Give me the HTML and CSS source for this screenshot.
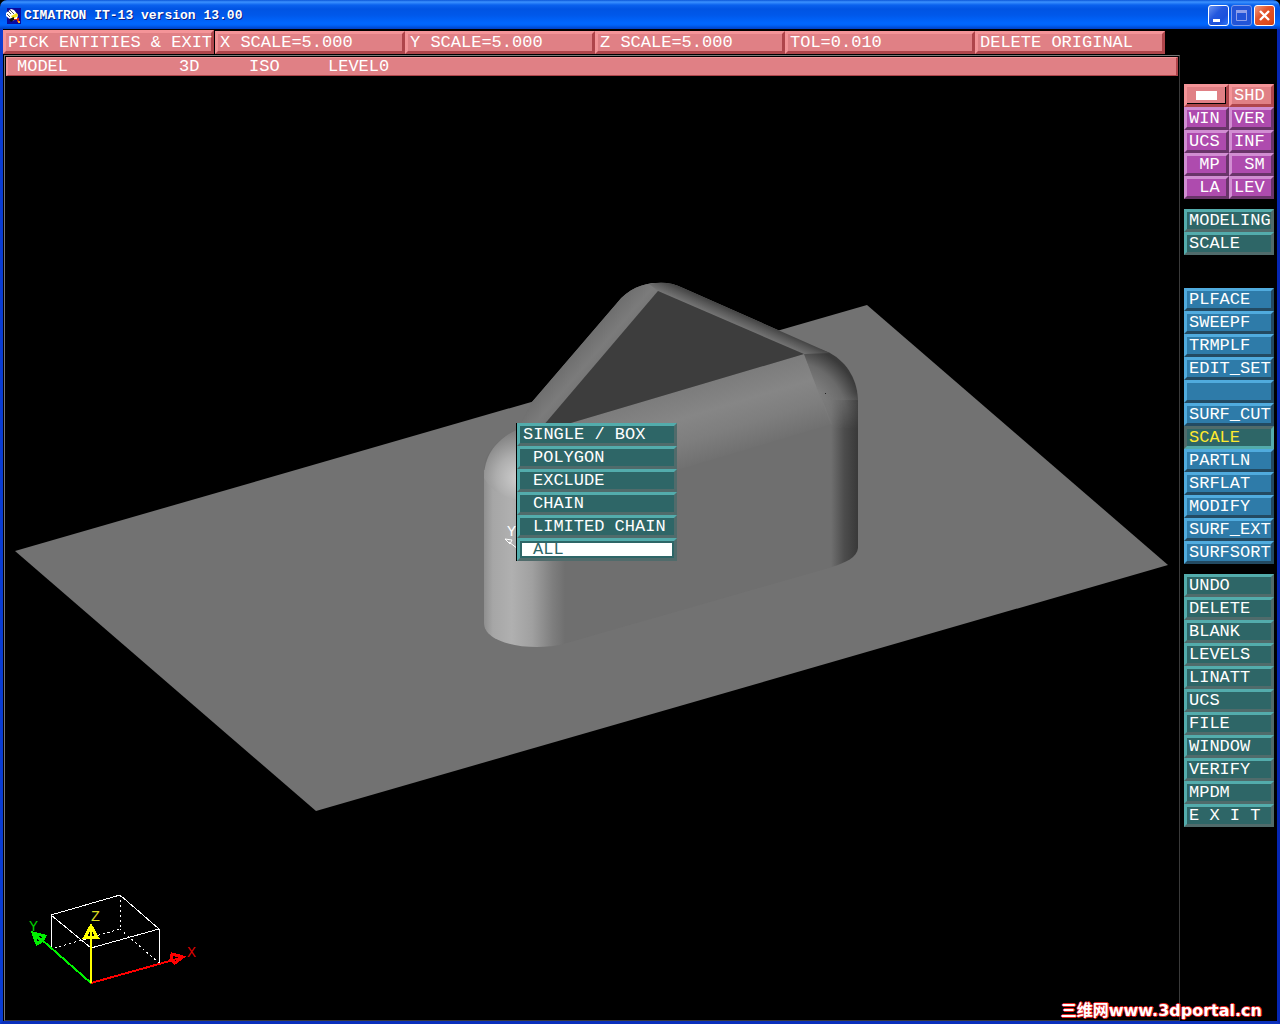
FILE: index.html
```html
<!DOCTYPE html>
<html lang="en">
<head>
<meta charset="utf-8">
<title>CIMATRON IT-13 version 13.00</title>
<link rel="stylesheet" href="styles.css">
</head>
<body>
<div class="window">
  <header class="titlebar">
    <svg class="app-icon" width="15" height="16" viewBox="0 0 15 16" aria-hidden="true">
      <rect x="1" width="14" height="16" fill="#0a0a9c"/>
      <path d="M0 5 L5 1 L8 2 L12 7 L11 11 L6 13 L0 8Z" fill="#fff"/>
      <path d="M2 3 L5 6 M4 2 L8 6 M1 6 L4 9" stroke="#555" fill="none"/>
      <path d="M5 8 L11 5 L12 8 L7 11Z" fill="#f5e21c"/>
      <path d="M3 11 L8 9 L8 12 L5 14Z" fill="#111"/>
      <path d="M8 11h3v-1h2v4h-2v-2H8Z" fill="#d22818"/>
      <path d="M12 13h2v2h-2Z" fill="#f5b01c"/>
    </svg>
    <h1 class="title">CIMATRON IT-13 version 13.00</h1>
    <div class="controls">
      <button class="control" aria-label="Minimize"><svg width="17" height="17" viewBox="0 0 17 17"><rect x="3" y="12" width="7" height="3" fill="#fff"/></svg></button>
      <button class="control dim" aria-label="Maximize" disabled><svg width="17" height="17" viewBox="0 0 17 17"><path d="M3.500 3.500h10v10h-10z" fill="none" stroke="#8fa0ea"/><path d="M3 3h11v3H3z" fill="#8fa0ea"/></svg></button>
      <button class="control close" aria-label="Close"><svg width="17" height="17" viewBox="0 0 17 17"><path d="M4 4l9 9M13 4l-9 9" stroke="#fff" stroke-width="2.400"/></svg></button>
    </div>
  </header>

  <div class="client">
    <nav class="prompts" aria-label="Prompt">
      <button class="key pink main-prompt">PICK ENTITIES &amp; EXIT</button>
      <button class="key pink">X SCALE=5.000</button>
      <button class="key pink">Y SCALE=5.000</button>
      <button class="key pink">Z SCALE=5.000</button>
      <button class="key pink">TOL=0.010</button>
      <button class="key pink">DELETE ORIGINAL</button>
    </nav>

    <div class="workspace">
      <main class="stage">
        <div class="status">
          <span class="model">MODEL</span><span class="dim-3d">3D</span><span class="view">ISO</span><span>LEVEL0</span>
        </div>
        <div class="canvas">
          <svg class="scene" viewBox="6 76 1173 943" preserveAspectRatio="xMinYMin meet" role="img" aria-label="Shaded isometric model">
            <defs>
              <linearGradient id="front" gradientUnits="userSpaceOnUse" x1="670" y1="394" x2="692" y2="468">
                <stop offset="0" stop-color="#7c7c7c"/><stop offset=".35" stop-color="#868686"/><stop offset=".65" stop-color="#7e7e7e"/><stop offset="1" stop-color="#6f6f6f"/>
              </linearGradient>
              <linearGradient id="back" gradientUnits="userSpaceOnUse" x1="730" y1="322" x2="737" y2="306">
                <stop offset="0" stop-color="#747474"/><stop offset=".4" stop-color="#595959"/><stop offset="1" stop-color="#2c2c2c"/>
              </linearGradient>
              <linearGradient id="leftCyl" gradientUnits="userSpaceOnUse" x1="483" y1="0" x2="565" y2="0">
                <stop offset="0" stop-color="#8c8c8c"/><stop offset=".12" stop-color="#a6a6a6"/><stop offset=".35" stop-color="#b0b0b0"/><stop offset=".6" stop-color="#a0a0a0"/><stop offset=".85" stop-color="#7e7e7e"/><stop offset="1" stop-color="#6f6f6f"/>
              </linearGradient>
              <linearGradient id="rightCyl" gradientUnits="userSpaceOnUse" x1="831" y1="0" x2="858" y2="0">
                <stop offset="0" stop-color="#6f6f6f"/><stop offset=".5" stop-color="#4c4c4c"/><stop offset="1" stop-color="#393939"/>
              </linearGradient>
              <linearGradient id="leftFillet" gradientUnits="userSpaceOnUse" x1="574" y1="348" x2="604" y2="374">
                <stop offset="0" stop-color="#6c6c6c"/><stop offset=".5" stop-color="#7b7b7b"/><stop offset="1" stop-color="#717171"/>
              </linearGradient>
              <radialGradient id="leftBall" gradientUnits="userSpaceOnUse" cx="520" cy="478" r="52">
                <stop offset="0" stop-color="#d0d0d0"/><stop offset=".45" stop-color="#aeaeae"/><stop offset="1" stop-color="#747474"/>
              </radialGradient>
              <radialGradient id="rightBall" gradientUnits="userSpaceOnUse" cx="788" cy="420" r="76">
                <stop offset=".55" stop-color="#3a3a3a" stop-opacity="0"/><stop offset=".78" stop-color="#3a3a3a" stop-opacity=".3"/><stop offset="1" stop-color="#3a3a3a"/>
              </radialGradient>
              <linearGradient id="fade" gradientUnits="userSpaceOnUse" x1="0" y1="392" x2="0" y2="430">
                <stop offset="0" stop-color="#fff"/><stop offset="1" stop-color="#000"/>
              </linearGradient>
              <mask id="ballFade" maskUnits="userSpaceOnUse" x="790" y="330" width="80" height="110">
                <rect x="790" y="330" width="80" height="110" fill="url(#fade)"/>
              </mask>
            </defs>
            <path fill="#727272" d="M15 551 867 305 1168 565 316 811Z"/>
            <path fill="#6f6f6f" d="M484 470C484 453 499 438 518 429L532 402 617 303C628 289 643 283 657 283Q671 282 683 288L830 353C848 363 858 381 858 400V548C857 557 846 563 832 567L563 644C530 652 484 644 484 623Z"/>
            <path fill="url(#leftFillet)" d="M532 402 617 303C628 289 643 283 657 283L664 283 658 291 537 433 510 445Z"/>
            <path fill="url(#rightCyl)" d="M831 400H858V548C857 557 846 563 831 567Z"/>
            <path fill="url(#front)" d="M537 433 804 354 832 424 566 503Z"/>
            <g mask="url(#ballFade)">
              <path fill="#7e7e7e" d="M804 354 820 349 830 353C848 363 858 381 858 402V428H832Z"/>
              <path fill="url(#rightBall)" d="M804 354 820 349 830 353C848 363 858 381 858 402V428H832Z"/>
            </g>
            <path fill="url(#back)" d="M658 291 649 284Q668 280 683 288L830 353 804 354Z"/>
            <path fill="url(#leftCyl)" d="M484 470H565V644C530 652 484 644 484 623Z"/>
            <path fill="url(#leftBall)" d="M484 478C484 453 499 438 518 429H565V500H518Q494 496 484 478Z"/>
            <path fill="#3d3d3d" d="M658 291 804 354 537 433Z"/>
            <rect x="825" y="393" width="1" height="1" fill="#222"/>
            <g class="label" fill="#fff"><text x="507" y="536">Y</text></g>
            <path d="M505 539l4 4M505 539l7 1-2 4zM509 542l9 7" stroke="#fff" fill="none"/>

            <g fill="none" stroke="#fff" shape-rendering="crispEdges">
              <path d="M51 915 120 895 159 929 91 948ZM51 915V949M159 929V963"/>
              <path stroke-dasharray="2 3" d="M120 895V929L51 949M120 929 159 963"/>
            </g>
            <g fill="none" stroke-width="2" shape-rendering="crispEdges">
              <path stroke="#00f000" d="M91 983 41 939"/>
              <path stroke="#00f000" stroke-width="3" d="M33 933 45 936 42 941 37 944ZM33 933 41 940"/>
              <path stroke="#f00" d="M91 983 184 957"/>
              <path stroke="#f00" stroke-width="3" d="M183 957 172 954 171 959 175 963Z"/>
              <path stroke="#ff0" d="M91 983V925"/>
              <path stroke="#ff0" stroke-width="3" d="M91 926 97 937H85Z"/>
            </g>
            <g class="label">
              <text x="29" y="931" fill="#0c0">Y</text>
              <text x="91" y="921" fill="#dd2">Z</text>
              <text x="187" y="957" fill="#d00">X</text>
            </g>
          </svg>
          <div class="popup" role="menu">
            <button class="key teal first" role="menuitem">SINGLE / BOX</button>
            <button class="key teal" role="menuitem">POLYGON</button>
            <button class="key teal" role="menuitem">EXCLUDE</button>
            <button class="key teal" role="menuitem">CHAIN</button>
            <button class="key teal" role="menuitem">LIMITED CHAIN</button>
            <button class="key teal picked" role="menuitem">ALL</button>
          </div>
        </div>
      </main>

      <aside class="sidebar">
        <div class="group pair">
          <button class="key pink pressed" aria-label="Redraw"><span class="swatch"></span></button>
          <button class="key pink">SHD</button>
          <button class="key purple">WIN</button>
          <button class="key purple">VER</button>
          <button class="key purple">UCS</button>
          <button class="key purple">INF</button>
          <button class="key purple"> MP</button>
          <button class="key purple"> SM</button>
          <button class="key purple"> LA</button>
          <button class="key purple">LEV</button>
        </div>
        <div class="group heading">
          <button class="key teal">MODELING</button>
          <button class="key teal">SCALE</button>
        </div>
        <div class="group">
          <button class="key blue">PLFACE</button>
          <button class="key blue">SWEEPF</button>
          <button class="key blue">TRMPLF</button>
          <button class="key blue">EDIT_SET</button>
          <button class="key blue" aria-label="Empty"></button>
          <button class="key blue">SURF_CUT</button>
          <button class="key teal current">SCALE</button>
          <button class="key blue">PARTLN</button>
          <button class="key blue">SRFLAT</button>
          <button class="key blue">MODIFY</button>
          <button class="key blue">SURF_EXT</button>
          <button class="key blue">SURFSORT</button>
        </div>
        <div class="group">
          <button class="key teal">UNDO</button>
          <button class="key teal">DELETE</button>
          <button class="key teal">BLANK</button>
          <button class="key teal">LEVELS</button>
          <button class="key teal">LINATT</button>
          <button class="key teal">UCS</button>
          <button class="key teal">FILE</button>
          <button class="key teal">WINDOW</button>
          <button class="key teal">VERIFY</button>
          <button class="key teal">MPDM</button>
          <button class="key teal">E X I T</button>
        </div>
      </aside>
    </div>
  </div>
  <a class="watermark" href="#">三维网www.3dportal.cn</a>
</div>
</body>
</html>
```
FILE: styles.css
```css
* { box-sizing: border-box; }

body {
  margin: 0;
  background: #000;
  font: 17px/17px "Liberation Mono", "Courier New", monospace;
  color: #fff;
}

.window {
  position: relative;
  display: flex;
  flex-direction: column;
  min-height: 100vh;
  background: #000;
}

/* Title bar */
.titlebar {
  display: flex;
  align-items: center;
  gap: 3px;
  height: 29px;
  padding: 2px 5px 0 6px;
  border-radius: 7px 7px 0 0;
  background: linear-gradient(#0a55d8, #3c92ff 2px, #0a62ee 5px, #0054e3 9px, #0058ea 15px, #0067ff 23px, #0064fa 25px, #0040c4);
}

.title {
  flex: 1;
  margin: 0;
  font-size: 13px;
  line-height: 16px;
  font-weight: bold;
  text-shadow: 1px 1px #0a1f86;
}

.controls { display: flex; gap: 2px; }

.control {
  display: grid;
  place-items: center;
  width: 21px;
  height: 21px;
  padding: 0;
  border: 1px solid #fff;
  border-radius: 3px;
  background: linear-gradient(135deg, #6b94f0, #2458de 40%, #1a50dc 70%, #2f78f8);
}
.control.dim { border-color: #7f9bea; background: #2254d8; }
.control.close { background: linear-gradient(135deg, #f09a80, #e2532b 40%, #dc4a1c 80%, #c83c10); }

/* Client area */
.client {
  flex: 1;
  display: flex;
  flex-direction: column;
  padding-top: 1px;
  border: solid #0a3cd2;
  border-width: 0 3px 3px;
  border-right-color: #0526b4;
  border-bottom-color: #0a30bc;
}

.key {
  height: 23px;
  padding: 0 0 0 2px;
  border: 3px solid;
  font: inherit;
  color: #fff;
  text-align: left;
  white-space: pre;
}
.pink { background: #e08085; border-color: #f49498 #af454b #af454b #f49498; }
.purple { background: #ae4bae; border-color: #d18dd2 #693469 #693469 #d18dd2; }
.teal { background: #2e6667; border-color: #53acac #506b6b #506b6b #53acac; }
.blue { background: #2e7ba9; border-color: #50abde #234a62 #234a62 #50abde; }

.prompts { display: flex; align-items: flex-end; height: 24px; }
.prompts .key { width: 190px; }
.prompts .main-prompt { width: 211px; height: 24px; margin-right: 1px; }

.workspace { flex: 1; display: flex; }

.stage {
  flex: 1;
  display: flex;
  flex-direction: column;
  margin-top: 1px;
  padding-top: 1px;
  border: 1px solid #777;
  border-color: #777 #3a3a3a #3a3a3a #777;
  margin-left: 1px;
}

.status {
  display: flex;
  height: 19px;
  margin: 0 1px;
  padding: 0 9px;
  border: solid;
  border-width: 1px 2px 1px 2px;
  border-color: #f49498 #af454b #af454b #f49498;
  background: #e08085;
}
.model { width: 162px; }
.dim-3d { width: 70px; }
.view { width: 79px; }

.canvas { position: relative; flex: 1; margin-left: 1px; }
.scene { display: block; width: 100%; }
.label { font-size: 15px; }

.popup {
  position: absolute;
  left: 510px;
  top: 347px;
  display: grid;
  width: 161px;
  border-left: 1px solid #000;
}
.popup .key { padding-left: 13px; }
.popup .first { padding-left: 3px; }
.popup .picked { color: #2e6667; background: #fff; box-shadow: inset 0 0 0 2px #2e6667; }

/* Side menu */
.sidebar {
  display: flex;
  flex-direction: column;
  gap: 10px;
  width: 97px;
  padding: 30px 3px 0 4px;
}
.group { display: grid; }
.pair { grid-template-columns: 1fr 1fr; }
.heading { margin-bottom: 23px; }
.pressed { box-shadow: inset -1px -1px #000; }
.swatch { display: block; width: 21px; height: 9px; margin-left: 7px; background: #fff; }
.current { color: #ffe92e; border-color: #506b6b #53acac #53acac #506b6b; }

.watermark {
  position: absolute;
  right: 18px;
  bottom: 4px;
  font: bold 16px/18px "DejaVu Sans", "Noto Sans CJK SC", sans-serif;
  color: #fff;
  text-decoration: none;
  text-shadow: 1px 0 #e02020, -1px 0 #e02020, 0 1px #e02020, 0 -1px #e02020;
}
```
